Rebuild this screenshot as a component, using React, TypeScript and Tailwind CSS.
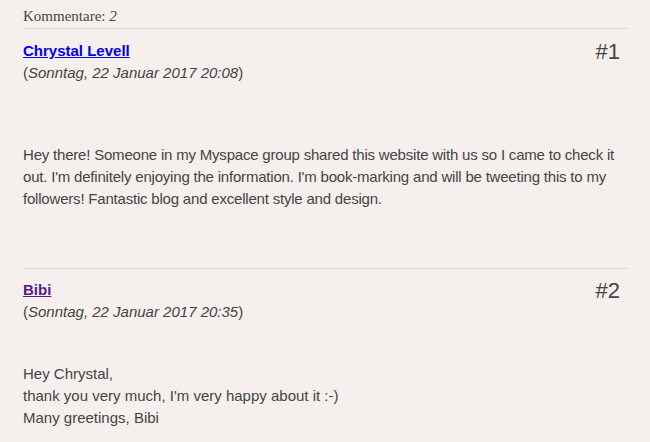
export default function App() {
  return (
    <div className="w-[650px] h-[442px] overflow-hidden bg-[#f5f0ed] text-[#444444]" style={{ fontFamily: '"Liberation Sans", Arial, sans-serif' }}>
      <div className="ml-[23px] w-[606px]">
        <div className="pt-[7px] pb-[3px] border-b border-[#dcd8d4] text-[15px] leading-[18px] text-[#444]" style={{ fontFamily: '"Liberation Serif", serif' }}>
          Kommentare: <i>2</i>
        </div>
        <div className="pt-[11px]">
          <div className="flex justify-between">
            <div>
              <a href="#" className="block text-[15px] leading-[22px] font-bold text-[#0000ee] underline">Chrystal Levell</a>
              <div className="text-[15px] leading-[22px]">(<i>Sonntag, 22 Januar 2017 20:08</i>)</div>
            </div>
            <div className="text-[22px] leading-[26px] mr-[9px] mt-[-1px]">#1</div>
          </div>
          <p className="mt-[60px] w-[610px] text-[15px] leading-[22px] tracking-[-0.2px]">
            Hey there! Someone in my Myspace group shared this website with us so I came to check it out. I'm definitely enjoying the information. I'm book-marking and will be tweeting this to my followers! Fantastic blog and excellent style and design.
          </p>
        </div>
        <div className="mt-[58px] border-t border-[#dcd8d4] pt-[10px]">
          <div className="flex justify-between">
            <div>
              <a href="#" className="block text-[15px] leading-[22px] font-bold text-[#551a8b] underline">Bibi</a>
              <div className="text-[15px] leading-[22px]">(<i>Sonntag, 22 Januar 2017 20:35</i>)</div>
            </div>
            <div className="text-[22px] leading-[26px] mr-[9px] mt-[-1px]">#2</div>
          </div>
          <p className="mt-[40px] text-[15px] leading-[22px]">
            Hey Chrystal,<br />
            thank you very much, I'm very happy about it :-)<br />
            Many greetings, Bibi
          </p>
        </div>
      </div>
    </div>
  );
}
